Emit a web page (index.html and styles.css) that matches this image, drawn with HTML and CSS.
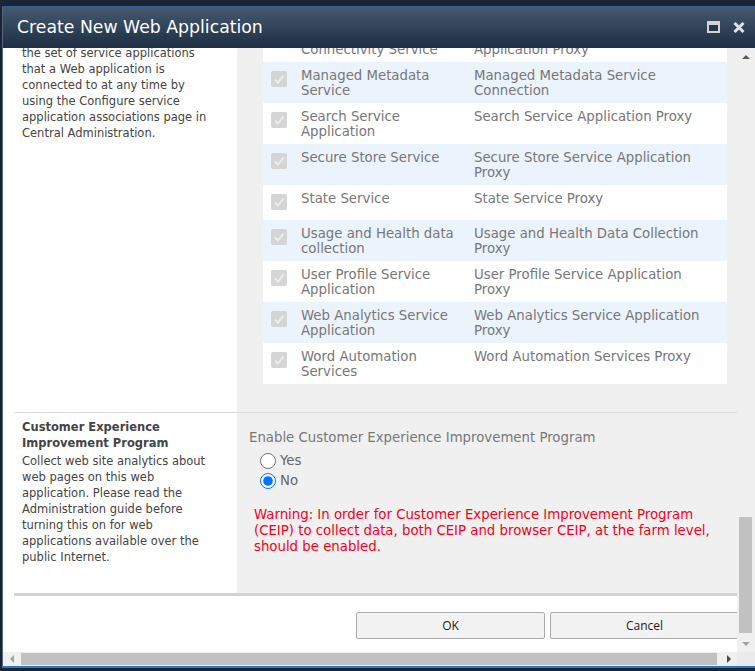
FILE: index.html
```html
<!DOCTYPE html>
<html lang="en">
<head>
<meta charset="utf-8">
<title>Create New Web Application</title>
<link rel="stylesheet" href="styles.css">
</head>
<body>
<div class="dialog">
  <div class="titlebar">
    <span class="title">Create New Web Application</span>
    <div class="title-tools">
      <svg class="tool" width="13" height="12" viewBox="0 0 13 12"><rect x="1" y="1" width="11" height="10" fill="#24384d" stroke="#d4d4d4" stroke-width="2"/><rect x="1" y="1" width="11" height="3" fill="#d4d4d4"/></svg>
      <svg class="tool" width="12" height="11" viewBox="0 0 12 11"><path d="M1.5 1 L10.5 10 M10.5 1 L1.5 10" stroke="#e2e2e2" stroke-width="3"/></svg>
    </div>
  </div>
  <div class="dlg-body">
    <div class="viewport">
      <div class="scroll-content">
        <section class="form-section sec-services">
          <div class="desc">
            <p>the set of service applications that a Web application is connected to at any time by using the Configure service application associations page in Central Administration.</p>
          </div>
          <div class="field">
            <table class="svc-table">
              <colgroup><col class="c-chk"><col class="c-name"><col class="c-proxy"></colgroup>
              <tr><td class="chk"><span class="cb"><svg width="16" height="16" viewBox="0 0 16 16"><path d="M4 8.5 L7 11.5 L12.5 4.5" fill="none" stroke="#ededed" stroke-width="2"/></svg></span></td><td class="name">Business Data Connectivity Service</td><td class="proxy">Business Data Connectivity Service Application Proxy</td></tr>
              <tr><td class="chk"><span class="cb"><svg width="16" height="16" viewBox="0 0 16 16"><path d="M4 8.5 L7 11.5 L12.5 4.5" fill="none" stroke="#ededed" stroke-width="2"/></svg></span></td><td class="name">Managed Metadata Service</td><td class="proxy">Managed Metadata Service Connection</td></tr>
              <tr><td class="chk"><span class="cb"><svg width="16" height="16" viewBox="0 0 16 16"><path d="M4 8.5 L7 11.5 L12.5 4.5" fill="none" stroke="#ededed" stroke-width="2"/></svg></span></td><td class="name">Search Service Application</td><td class="proxy">Search Service Application Proxy</td></tr>
              <tr><td class="chk"><span class="cb"><svg width="16" height="16" viewBox="0 0 16 16"><path d="M4 8.5 L7 11.5 L12.5 4.5" fill="none" stroke="#ededed" stroke-width="2"/></svg></span></td><td class="name">Secure Store Service</td><td class="proxy">Secure Store Service Application Proxy</td></tr>
              <tr><td class="chk"><span class="cb"><svg width="16" height="16" viewBox="0 0 16 16"><path d="M4 8.5 L7 11.5 L12.5 4.5" fill="none" stroke="#ededed" stroke-width="2"/></svg></span></td><td class="name">State Service</td><td class="proxy">State Service Proxy</td></tr>
              <tr><td class="chk"><span class="cb"><svg width="16" height="16" viewBox="0 0 16 16"><path d="M4 8.5 L7 11.5 L12.5 4.5" fill="none" stroke="#ededed" stroke-width="2"/></svg></span></td><td class="name">Usage and Health data collection</td><td class="proxy">Usage and Health Data Collection Proxy</td></tr>
              <tr><td class="chk"><span class="cb"><svg width="16" height="16" viewBox="0 0 16 16"><path d="M4 8.5 L7 11.5 L12.5 4.5" fill="none" stroke="#ededed" stroke-width="2"/></svg></span></td><td class="name">User Profile Service Application</td><td class="proxy">User Profile Service Application Proxy</td></tr>
              <tr><td class="chk"><span class="cb"><svg width="16" height="16" viewBox="0 0 16 16"><path d="M4 8.5 L7 11.5 L12.5 4.5" fill="none" stroke="#ededed" stroke-width="2"/></svg></span></td><td class="name">Web Analytics Service Application</td><td class="proxy">Web Analytics Service Application Proxy</td></tr>
              <tr><td class="chk"><span class="cb"><svg width="16" height="16" viewBox="0 0 16 16"><path d="M4 8.5 L7 11.5 L12.5 4.5" fill="none" stroke="#ededed" stroke-width="2"/></svg></span></td><td class="name">Word Automation Services</td><td class="proxy">Word Automation Services Proxy</td></tr>
            </table>
          </div>
        </section>
        <section class="form-section sec-ceip">
          <div class="desc">
            <h3>Customer Experience Improvement Program</h3>
            <p>Collect web site analytics about web pages on this web application. Please read the Administration guide before turning this on for web applications available over the public Internet.</p>
          </div>
          <div class="field">
            <div class="field-label">Enable Customer Experience Improvement Program</div>
            <div class="radios">
              <label class="radio-row"><input type="radio" name="ceip"><span>Yes</span></label>
              <label class="radio-row"><input type="radio" name="ceip" checked><span>No</span></label>
            </div>
            <p class="warning">Warning: In order for Customer Experience Improvement Program (CEIP) to collect data, both CEIP and browser CEIP, at the farm level, should be enabled.</p>
          </div>
        </section>
        <div class="footer">
          <button class="btn">OK</button>
          <button class="btn">Cancel</button>
        </div>
      </div>
    </div>
    <div class="vscroll">
      <div class="sb-btn-v"><span class="arr-up"></span></div>
      <div class="vtrack"><div class="vthumb"></div></div>
      <div class="sb-btn-v"><span class="arr-down"></span></div>
    </div>
    <div class="hscroll">
      <div class="sb-btn-h left"><span class="arr-left"></span></div>
      <div class="htrack"><div class="hthumb"></div></div>
      <div class="sb-btn-h right"><span class="arr-right"></span></div>
    </div>
    <div class="corner"></div>
  </div>
</div>
</body>
</html>
```
FILE: styles.css
```css
* { box-sizing: border-box; }
html, body { margin: 0; height: 100%; }
body {
  background: #1b2434;
  font-family: "DejaVu Sans", Verdana, sans-serif;
  overflow: hidden;
}
.dialog {
  margin: 6px 0 0 2px;
  width: 753px;
  border-top: 1px solid #2f6296;
  border-left: 1px solid #53677d;
  border-bottom: 2px solid #2b78c9;
  background: #fff;
}
.titlebar {
  height: 41px;
  display: flex;
  align-items: center;
  padding-left: 14px;
  background: linear-gradient(#45596f, #1d2e42);
}
.title {
  flex: 1;
  color: #fff;
  font-size: 17.3px;
  line-height: 41px;
  white-space: nowrap;
}
.title-tools {
  display: flex;
  align-items: center;
  gap: 13px;
  padding-right: 10px;
  margin-top: -1px;
}
.tool { display: block; }

.dlg-body {
  display: grid;
  grid-template-columns: 734px 18px;
  grid-template-rows: 604px 14px;
}
.viewport {
  overflow: hidden;
  background: #fff;
}
.scroll-content { margin-top: -27px; }

.form-section {
  display: grid;
  grid-template-columns: 223px 500px;
  margin-left: 11px;
}
.desc {
  padding: 0 20px 0 8px;
  font-size: 11.5px;
  line-height: 16px;
  color: #444;
}
.desc p { margin: 0; }
.sec-services .desc { padding-top: 24px; }
.field { background: #f0f0f0; }
.sec-services .field { padding: 0 10px 28px 26px; }

.svc-table {
  border-collapse: collapse;
  table-layout: fixed;
  width: 464px;
}
.c-chk { width: 38px; }
.c-name { width: 173px; }
.c-proxy { width: 253px; }
.svc-table tr { background: #fff; }
.svc-table tr:nth-child(even) { background: #ebf3fc; }
.svc-table td {
  vertical-align: top;
  padding: 6px 0 5px;
  font-size: 13.3px;
  line-height: 15px;
  color: #777;
}
.svc-table td.chk { padding: 9px 0 10px 8px; }
.svc-table td.name { padding-right: 5px; }
.svc-table td.proxy { padding-right: 10px; }
.cb {
  display: block;
  width: 16px;
  height: 16px;
  border-radius: 2px;
  background: #d5d5d5;
}
.cb svg { display: block; }

.sec-ceip {
  border-top: 1px solid #dcdcdc;
  border-bottom: 3px solid #d2d2d2;
}
.sec-ceip .desc { padding-top: 6px; }
.sec-ceip h3 {
  margin: 0;
  font-size: 11.5px;
  line-height: 16px;
  font-weight: bold;
  color: #444;
}
.sec-ceip .desc p { margin-top: 2px; }
.sec-ceip .field { padding: 17px 0 38px 12px; }
.field-label {
  font-size: 13.3px;
  line-height: 16px;
  color: #777;
}
.radios { margin: 5px 0 0 11px; }
.radio-row {
  display: flex;
  align-items: center;
  gap: 4px;
  height: 20px;
  font-size: 13.3px;
  line-height: 16px;
  color: #666;
}
.radio-row input {
  width: 16px;
  height: 16px;
  margin: 0;
}
.warning {
  margin: 16px 0 0 5px;
  font-size: 13.3px;
  line-height: 16px;
  color: #f2001c;
}

.footer {
  display: flex;
  gap: 5px;
  padding: 16px 0 0 353px;
}
.btn {
  flex-shrink: 0;
  width: 189px;
  height: 27px;
  border: 1px solid #ababab;
  border-radius: 2px;
  background: #f2f2f2;
  font-family: "Open Sans", "DejaVu Sans", sans-serif;
  font-size: 12px;
  color: #1a1a1a;
  padding: 0;
}

.vscroll {
  grid-column: 2;
  grid-row: 1;
  background: #f0f0f0;
  display: flex;
  flex-direction: column;
}
.sb-btn-v {
  height: 17px;
  display: flex;
  align-items: center;
  justify-content: center;
}
.vtrack { flex: 1; }
.vthumb {
  margin: 452px 0 0 2px;
  width: 13px;
  height: 116px;
  background: #c1c1c1;
}
.arr-up {
  width: 0; height: 0;
  border-left: 4px solid transparent;
  border-right: 4px solid transparent;
  border-bottom: 4px solid #5a5a5a;
}
.arr-down {
  width: 0; height: 0;
  border-left: 4px solid transparent;
  border-right: 4px solid transparent;
  border-top: 4px solid #a3a3a3;
}
.hscroll {
  grid-column: 1;
  grid-row: 2;
  background: #f0f0f0;
  display: flex;
}
.sb-btn-h {
  display: flex;
  align-items: center;
  justify-content: center;
}
.sb-btn-h.left { width: 18px; }
.sb-btn-h.right { width: 17px; }
.htrack { flex: 1; }
.hthumb {
  margin-top: 1px;
  width: 696px;
  height: 12px;
  background: #c1c1c1;
}
.arr-left {
  width: 0; height: 0;
  border-top: 4px solid transparent;
  border-bottom: 4px solid transparent;
  border-right: 4px solid #a3a3a3;
}
.arr-right {
  width: 0; height: 0;
  border-top: 4px solid transparent;
  border-bottom: 4px solid transparent;
  border-left: 4px solid #4a4a4a;
}
.corner {
  grid-column: 2;
  grid-row: 2;
  background: #ebebeb;
}
```
